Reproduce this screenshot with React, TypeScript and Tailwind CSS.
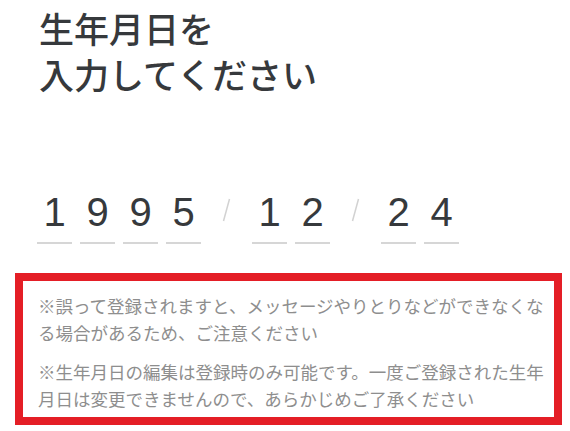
const JP = "font-['Noto_Sans_CJK_JP',sans-serif]";

const YEAR = ["1", "9", "9", "5"];
const MONTH = ["1", "2"];
const DAY = ["2", "4"];

function DigitGroup({ digits }: { digits: string[] }) {
  return (
    <div className="flex gap-2">
      {digits.map((d, i) => (
        <div key={i} className="w-[35px] flex flex-col items-center">
          <span className="font-['Liberation_Sans',Arial,sans-serif] text-[40px] leading-[48px] text-[#36393c]">
            {d}
          </span>
          <div className="mt-[6px] h-[1.5px] w-full bg-[#d6d6d6]" />
        </div>
      ))}
    </div>
  );
}

function Slash() {
  return (
    <div className="w-[51px] flex justify-center pt-[10px]">
      <svg width="10" height="24" viewBox="0 0 10 24">
        <line x1="7.5" y1="1" x2="1.5" y2="23" stroke="#d2d2d2" strokeWidth="1.5" />
      </svg>
    </div>
  );
}

export default function App() {
  return (
    <div className={`w-[570px] h-[431px] bg-white overflow-hidden ${JP}`}>
      <h1 className="pl-[39px] pt-[5px] text-[35px] leading-[46px] font-medium text-[#36393c]">
        生年月日を
        <br />
        入力してください
      </h1>

      <div className="mt-[91px] pl-[37px] flex items-start">
        <DigitGroup digits={YEAR} />
        <Slash />
        <DigitGroup digits={MONTH} />
        <Slash />
        <DigitGroup digits={DAY} />
      </div>

      <div className="mt-[29px] ml-[15px] w-[547px] h-[152px] border-[8px] border-[#e41e26] pl-[15px] pr-[2px] pt-[11px] text-[17.5px] leading-[27px] text-[#8e8e8e]">
        <p>※誤って登録されますと、メッセージやりとりなどができなくなる場合があるため、ご注意ください</p>
        <p className="mt-[12px]">※生年月日の編集は登録時のみ可能です。一度ご登録された生年月日は変更できませんので、あらかじめご了承ください</p>
      </div>
    </div>
  );
}
